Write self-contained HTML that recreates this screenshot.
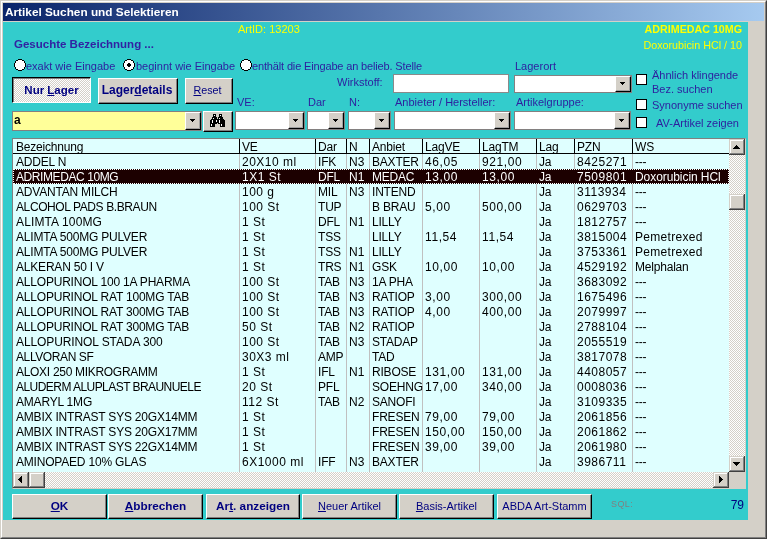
<!DOCTYPE html><html><head><meta charset="utf-8"><style>
*{margin:0;padding:0;box-sizing:border-box}
html,body{width:767px;height:539px;overflow:hidden;background:#d4d0c8;font-family:"Liberation Sans",sans-serif}
#w{position:absolute;left:0;top:0;width:767px;height:539px;will-change:transform}
.a{position:absolute}
.t{position:absolute;white-space:nowrap;line-height:1}
.lbl{color:#2e1e9e;font-size:11px}
.btn{position:absolute;background:#d4d0c8;border-top:1px solid #fff;border-left:1px solid #fff;border-right:1px solid #000;border-bottom:1px solid #000;box-shadow:inset -1px -1px #808080;color:#000080;font-size:11px;text-align:center;white-space:nowrap}
.combo{position:absolute;background:#fff;border:1px solid #8a8a8a}
.dd{position:absolute;right:0;top:0;width:16px;bottom:0;background:#d4d0c8;border-top:1px solid #d4d0c8;border-left:1px solid #d4d0c8;border-right:1px solid #000;border-bottom:1px solid #000;box-shadow:inset 1px 1px #fff,inset -1px -1px #808080}
.arr{position:absolute;left:4px;top:6px;width:0;height:0;border-left:3.5px solid transparent;border-right:3.5px solid transparent;border-top:4px solid #000}
.chk{position:absolute;width:11px;height:11px;background:#fff;border:1px solid #000}
.rad{position:absolute;width:12px;height:12px;background:#fff;border:1px solid #000;border-radius:50%}
.row{position:absolute;left:0;height:15px;width:716px;font-size:11.5px;color:#000}
.row .c{position:absolute;top:1px;white-space:nowrap;line-height:13px}
.sb{position:absolute;background:#d4d0c8;box-shadow:inset -1px -1px #404040,inset 1px 1px #d4d0c8,inset -2px -2px #808080,inset 2px 2px #fff}
u{text-decoration:underline;text-decoration-thickness:1px;text-underline-offset:0.5px;text-decoration-skip-ink:none}
</style></head><body><div id="w">

<div class="a" style="left:0;top:0;width:767px;height:539px;border-top:1px solid #d4d0c8;border-left:1px solid #d4d0c8;border-right:1px solid #404040;border-bottom:1px solid #404040"></div>
<div class="a" style="left:1px;top:1px;width:765px;height:537px;border-top:1px solid #fff;border-left:1px solid #fff;border-right:1px solid #808080;border-bottom:1px solid #808080"></div>
<div class="a" style="left:3px;top:3px;width:761px;height:18px;background:linear-gradient(90deg,#0a246a,#a6caf0)"></div>
<div class="t" style="left:5px;top:5px;color:#fff;font-weight:bold;font-size:11.8px;line-height:14px">Artikel Suchen und Selektieren</div>
<div class="a" style="left:3px;top:22px;width:745px;height:498px;background:#33cccc"></div>
<div class="t" style="left:238px;top:23px;color:#ffff00;font-size:11px;line-height:12px">ArtID: 13203</div>
<div class="t" style="left:0;width:742px;text-align:right;top:23px;color:#ffff00;font-size:10.7px;font-weight:bold;line-height:12px">ADRIMEDAC 10MG</div>
<div class="t" style="left:0;width:742px;text-align:right;top:39px;color:#ffff00;font-size:10.75px;line-height:12px">Doxorubicin HCl / 10</div>
<div class="t" style="left:14px;top:38px;color:#3222a2;font-size:11.5px;font-weight:bold;line-height:12px">Gesuchte Bezeichnung ...</div>
<svg class="a" style="left:14px;top:59px" width="12" height="12" shape-rendering="crispEdges"><rect x="4" y="0" width="1" height="1" fill="#000"/><rect x="5" y="0" width="1" height="1" fill="#000"/><rect x="6" y="0" width="1" height="1" fill="#000"/><rect x="7" y="0" width="1" height="1" fill="#000"/><rect x="2" y="1" width="1" height="1" fill="#000"/><rect x="3" y="1" width="1" height="1" fill="#000"/><rect x="4" y="1" width="1" height="1" fill="#fff"/><rect x="5" y="1" width="1" height="1" fill="#fff"/><rect x="6" y="1" width="1" height="1" fill="#fff"/><rect x="7" y="1" width="1" height="1" fill="#fff"/><rect x="8" y="1" width="1" height="1" fill="#000"/><rect x="9" y="1" width="1" height="1" fill="#000"/><rect x="1" y="2" width="1" height="1" fill="#000"/><rect x="2" y="2" width="1" height="1" fill="#fff"/><rect x="3" y="2" width="1" height="1" fill="#fff"/><rect x="4" y="2" width="1" height="1" fill="#fff"/><rect x="5" y="2" width="1" height="1" fill="#fff"/><rect x="6" y="2" width="1" height="1" fill="#fff"/><rect x="7" y="2" width="1" height="1" fill="#fff"/><rect x="8" y="2" width="1" height="1" fill="#fff"/><rect x="9" y="2" width="1" height="1" fill="#fff"/><rect x="10" y="2" width="1" height="1" fill="#000"/><rect x="1" y="3" width="1" height="1" fill="#000"/><rect x="2" y="3" width="1" height="1" fill="#fff"/><rect x="3" y="3" width="1" height="1" fill="#fff"/><rect x="4" y="3" width="1" height="1" fill="#fff"/><rect x="5" y="3" width="1" height="1" fill="#fff"/><rect x="6" y="3" width="1" height="1" fill="#fff"/><rect x="7" y="3" width="1" height="1" fill="#fff"/><rect x="8" y="3" width="1" height="1" fill="#fff"/><rect x="9" y="3" width="1" height="1" fill="#fff"/><rect x="10" y="3" width="1" height="1" fill="#000"/><rect x="0" y="4" width="1" height="1" fill="#000"/><rect x="1" y="4" width="1" height="1" fill="#fff"/><rect x="2" y="4" width="1" height="1" fill="#fff"/><rect x="3" y="4" width="1" height="1" fill="#fff"/><rect x="4" y="4" width="1" height="1" fill="#fff"/><rect x="5" y="4" width="1" height="1" fill="#fff"/><rect x="6" y="4" width="1" height="1" fill="#fff"/><rect x="7" y="4" width="1" height="1" fill="#fff"/><rect x="8" y="4" width="1" height="1" fill="#fff"/><rect x="9" y="4" width="1" height="1" fill="#fff"/><rect x="10" y="4" width="1" height="1" fill="#fff"/><rect x="11" y="4" width="1" height="1" fill="#000"/><rect x="0" y="5" width="1" height="1" fill="#000"/><rect x="1" y="5" width="1" height="1" fill="#fff"/><rect x="2" y="5" width="1" height="1" fill="#fff"/><rect x="3" y="5" width="1" height="1" fill="#fff"/><rect x="4" y="5" width="1" height="1" fill="#fff"/><rect x="5" y="5" width="1" height="1" fill="#fff"/><rect x="6" y="5" width="1" height="1" fill="#fff"/><rect x="7" y="5" width="1" height="1" fill="#fff"/><rect x="8" y="5" width="1" height="1" fill="#fff"/><rect x="9" y="5" width="1" height="1" fill="#fff"/><rect x="10" y="5" width="1" height="1" fill="#fff"/><rect x="11" y="5" width="1" height="1" fill="#000"/><rect x="0" y="6" width="1" height="1" fill="#000"/><rect x="1" y="6" width="1" height="1" fill="#fff"/><rect x="2" y="6" width="1" height="1" fill="#fff"/><rect x="3" y="6" width="1" height="1" fill="#fff"/><rect x="4" y="6" width="1" height="1" fill="#fff"/><rect x="5" y="6" width="1" height="1" fill="#fff"/><rect x="6" y="6" width="1" height="1" fill="#fff"/><rect x="7" y="6" width="1" height="1" fill="#fff"/><rect x="8" y="6" width="1" height="1" fill="#fff"/><rect x="9" y="6" width="1" height="1" fill="#fff"/><rect x="10" y="6" width="1" height="1" fill="#fff"/><rect x="11" y="6" width="1" height="1" fill="#000"/><rect x="0" y="7" width="1" height="1" fill="#000"/><rect x="1" y="7" width="1" height="1" fill="#fff"/><rect x="2" y="7" width="1" height="1" fill="#fff"/><rect x="3" y="7" width="1" height="1" fill="#fff"/><rect x="4" y="7" width="1" height="1" fill="#fff"/><rect x="5" y="7" width="1" height="1" fill="#fff"/><rect x="6" y="7" width="1" height="1" fill="#fff"/><rect x="7" y="7" width="1" height="1" fill="#fff"/><rect x="8" y="7" width="1" height="1" fill="#fff"/><rect x="9" y="7" width="1" height="1" fill="#fff"/><rect x="10" y="7" width="1" height="1" fill="#fff"/><rect x="11" y="7" width="1" height="1" fill="#000"/><rect x="1" y="8" width="1" height="1" fill="#000"/><rect x="2" y="8" width="1" height="1" fill="#fff"/><rect x="3" y="8" width="1" height="1" fill="#fff"/><rect x="4" y="8" width="1" height="1" fill="#fff"/><rect x="5" y="8" width="1" height="1" fill="#fff"/><rect x="6" y="8" width="1" height="1" fill="#fff"/><rect x="7" y="8" width="1" height="1" fill="#fff"/><rect x="8" y="8" width="1" height="1" fill="#fff"/><rect x="9" y="8" width="1" height="1" fill="#fff"/><rect x="10" y="8" width="1" height="1" fill="#000"/><rect x="1" y="9" width="1" height="1" fill="#000"/><rect x="2" y="9" width="1" height="1" fill="#fff"/><rect x="3" y="9" width="1" height="1" fill="#fff"/><rect x="4" y="9" width="1" height="1" fill="#fff"/><rect x="5" y="9" width="1" height="1" fill="#fff"/><rect x="6" y="9" width="1" height="1" fill="#fff"/><rect x="7" y="9" width="1" height="1" fill="#fff"/><rect x="8" y="9" width="1" height="1" fill="#fff"/><rect x="9" y="9" width="1" height="1" fill="#fff"/><rect x="10" y="9" width="1" height="1" fill="#000"/><rect x="2" y="10" width="1" height="1" fill="#000"/><rect x="3" y="10" width="1" height="1" fill="#000"/><rect x="4" y="10" width="1" height="1" fill="#fff"/><rect x="5" y="10" width="1" height="1" fill="#fff"/><rect x="6" y="10" width="1" height="1" fill="#fff"/><rect x="7" y="10" width="1" height="1" fill="#fff"/><rect x="8" y="10" width="1" height="1" fill="#000"/><rect x="9" y="10" width="1" height="1" fill="#000"/><rect x="4" y="11" width="1" height="1" fill="#000"/><rect x="5" y="11" width="1" height="1" fill="#000"/><rect x="6" y="11" width="1" height="1" fill="#000"/><rect x="7" y="11" width="1" height="1" fill="#000"/></svg>
<div class="t lbl" style="left:26px;top:60px;line-height:12px">exakt wie Eingabe</div>
<svg class="a" style="left:123px;top:59px" width="12" height="12" shape-rendering="crispEdges"><rect x="4" y="0" width="1" height="1" fill="#000"/><rect x="5" y="0" width="1" height="1" fill="#000"/><rect x="6" y="0" width="1" height="1" fill="#000"/><rect x="7" y="0" width="1" height="1" fill="#000"/><rect x="2" y="1" width="1" height="1" fill="#000"/><rect x="3" y="1" width="1" height="1" fill="#000"/><rect x="4" y="1" width="1" height="1" fill="#fff"/><rect x="5" y="1" width="1" height="1" fill="#fff"/><rect x="6" y="1" width="1" height="1" fill="#fff"/><rect x="7" y="1" width="1" height="1" fill="#fff"/><rect x="8" y="1" width="1" height="1" fill="#000"/><rect x="9" y="1" width="1" height="1" fill="#000"/><rect x="1" y="2" width="1" height="1" fill="#000"/><rect x="2" y="2" width="1" height="1" fill="#fff"/><rect x="3" y="2" width="1" height="1" fill="#fff"/><rect x="4" y="2" width="1" height="1" fill="#fff"/><rect x="5" y="2" width="1" height="1" fill="#fff"/><rect x="6" y="2" width="1" height="1" fill="#fff"/><rect x="7" y="2" width="1" height="1" fill="#fff"/><rect x="8" y="2" width="1" height="1" fill="#fff"/><rect x="9" y="2" width="1" height="1" fill="#fff"/><rect x="10" y="2" width="1" height="1" fill="#000"/><rect x="1" y="3" width="1" height="1" fill="#000"/><rect x="2" y="3" width="1" height="1" fill="#fff"/><rect x="3" y="3" width="1" height="1" fill="#fff"/><rect x="4" y="3" width="1" height="1" fill="#fff"/><rect x="5" y="3" width="1" height="1" fill="#fff"/><rect x="6" y="3" width="1" height="1" fill="#fff"/><rect x="7" y="3" width="1" height="1" fill="#fff"/><rect x="8" y="3" width="1" height="1" fill="#fff"/><rect x="9" y="3" width="1" height="1" fill="#fff"/><rect x="10" y="3" width="1" height="1" fill="#000"/><rect x="0" y="4" width="1" height="1" fill="#000"/><rect x="1" y="4" width="1" height="1" fill="#fff"/><rect x="2" y="4" width="1" height="1" fill="#fff"/><rect x="3" y="4" width="1" height="1" fill="#fff"/><rect x="4" y="4" width="1" height="1" fill="#fff"/><rect x="5" y="4" width="1" height="1" fill="#000"/><rect x="6" y="4" width="1" height="1" fill="#000"/><rect x="7" y="4" width="1" height="1" fill="#fff"/><rect x="8" y="4" width="1" height="1" fill="#fff"/><rect x="9" y="4" width="1" height="1" fill="#fff"/><rect x="10" y="4" width="1" height="1" fill="#fff"/><rect x="11" y="4" width="1" height="1" fill="#000"/><rect x="0" y="5" width="1" height="1" fill="#000"/><rect x="1" y="5" width="1" height="1" fill="#fff"/><rect x="2" y="5" width="1" height="1" fill="#fff"/><rect x="3" y="5" width="1" height="1" fill="#fff"/><rect x="4" y="5" width="1" height="1" fill="#000"/><rect x="5" y="5" width="1" height="1" fill="#000"/><rect x="6" y="5" width="1" height="1" fill="#000"/><rect x="7" y="5" width="1" height="1" fill="#000"/><rect x="8" y="5" width="1" height="1" fill="#fff"/><rect x="9" y="5" width="1" height="1" fill="#fff"/><rect x="10" y="5" width="1" height="1" fill="#fff"/><rect x="11" y="5" width="1" height="1" fill="#000"/><rect x="0" y="6" width="1" height="1" fill="#000"/><rect x="1" y="6" width="1" height="1" fill="#fff"/><rect x="2" y="6" width="1" height="1" fill="#fff"/><rect x="3" y="6" width="1" height="1" fill="#fff"/><rect x="4" y="6" width="1" height="1" fill="#000"/><rect x="5" y="6" width="1" height="1" fill="#000"/><rect x="6" y="6" width="1" height="1" fill="#000"/><rect x="7" y="6" width="1" height="1" fill="#000"/><rect x="8" y="6" width="1" height="1" fill="#fff"/><rect x="9" y="6" width="1" height="1" fill="#fff"/><rect x="10" y="6" width="1" height="1" fill="#fff"/><rect x="11" y="6" width="1" height="1" fill="#000"/><rect x="0" y="7" width="1" height="1" fill="#000"/><rect x="1" y="7" width="1" height="1" fill="#fff"/><rect x="2" y="7" width="1" height="1" fill="#fff"/><rect x="3" y="7" width="1" height="1" fill="#fff"/><rect x="4" y="7" width="1" height="1" fill="#fff"/><rect x="5" y="7" width="1" height="1" fill="#000"/><rect x="6" y="7" width="1" height="1" fill="#000"/><rect x="7" y="7" width="1" height="1" fill="#fff"/><rect x="8" y="7" width="1" height="1" fill="#fff"/><rect x="9" y="7" width="1" height="1" fill="#fff"/><rect x="10" y="7" width="1" height="1" fill="#fff"/><rect x="11" y="7" width="1" height="1" fill="#000"/><rect x="1" y="8" width="1" height="1" fill="#000"/><rect x="2" y="8" width="1" height="1" fill="#fff"/><rect x="3" y="8" width="1" height="1" fill="#fff"/><rect x="4" y="8" width="1" height="1" fill="#fff"/><rect x="5" y="8" width="1" height="1" fill="#fff"/><rect x="6" y="8" width="1" height="1" fill="#fff"/><rect x="7" y="8" width="1" height="1" fill="#fff"/><rect x="8" y="8" width="1" height="1" fill="#fff"/><rect x="9" y="8" width="1" height="1" fill="#fff"/><rect x="10" y="8" width="1" height="1" fill="#000"/><rect x="1" y="9" width="1" height="1" fill="#000"/><rect x="2" y="9" width="1" height="1" fill="#fff"/><rect x="3" y="9" width="1" height="1" fill="#fff"/><rect x="4" y="9" width="1" height="1" fill="#fff"/><rect x="5" y="9" width="1" height="1" fill="#fff"/><rect x="6" y="9" width="1" height="1" fill="#fff"/><rect x="7" y="9" width="1" height="1" fill="#fff"/><rect x="8" y="9" width="1" height="1" fill="#fff"/><rect x="9" y="9" width="1" height="1" fill="#fff"/><rect x="10" y="9" width="1" height="1" fill="#000"/><rect x="2" y="10" width="1" height="1" fill="#000"/><rect x="3" y="10" width="1" height="1" fill="#000"/><rect x="4" y="10" width="1" height="1" fill="#fff"/><rect x="5" y="10" width="1" height="1" fill="#fff"/><rect x="6" y="10" width="1" height="1" fill="#fff"/><rect x="7" y="10" width="1" height="1" fill="#fff"/><rect x="8" y="10" width="1" height="1" fill="#000"/><rect x="9" y="10" width="1" height="1" fill="#000"/><rect x="4" y="11" width="1" height="1" fill="#000"/><rect x="5" y="11" width="1" height="1" fill="#000"/><rect x="6" y="11" width="1" height="1" fill="#000"/><rect x="7" y="11" width="1" height="1" fill="#000"/></svg>
<div class="t lbl" style="left:136px;top:60px;line-height:12px">beginnt wie Eingabe</div>
<svg class="a" style="left:240px;top:59px" width="12" height="12" shape-rendering="crispEdges"><rect x="4" y="0" width="1" height="1" fill="#000"/><rect x="5" y="0" width="1" height="1" fill="#000"/><rect x="6" y="0" width="1" height="1" fill="#000"/><rect x="7" y="0" width="1" height="1" fill="#000"/><rect x="2" y="1" width="1" height="1" fill="#000"/><rect x="3" y="1" width="1" height="1" fill="#000"/><rect x="4" y="1" width="1" height="1" fill="#fff"/><rect x="5" y="1" width="1" height="1" fill="#fff"/><rect x="6" y="1" width="1" height="1" fill="#fff"/><rect x="7" y="1" width="1" height="1" fill="#fff"/><rect x="8" y="1" width="1" height="1" fill="#000"/><rect x="9" y="1" width="1" height="1" fill="#000"/><rect x="1" y="2" width="1" height="1" fill="#000"/><rect x="2" y="2" width="1" height="1" fill="#fff"/><rect x="3" y="2" width="1" height="1" fill="#fff"/><rect x="4" y="2" width="1" height="1" fill="#fff"/><rect x="5" y="2" width="1" height="1" fill="#fff"/><rect x="6" y="2" width="1" height="1" fill="#fff"/><rect x="7" y="2" width="1" height="1" fill="#fff"/><rect x="8" y="2" width="1" height="1" fill="#fff"/><rect x="9" y="2" width="1" height="1" fill="#fff"/><rect x="10" y="2" width="1" height="1" fill="#000"/><rect x="1" y="3" width="1" height="1" fill="#000"/><rect x="2" y="3" width="1" height="1" fill="#fff"/><rect x="3" y="3" width="1" height="1" fill="#fff"/><rect x="4" y="3" width="1" height="1" fill="#fff"/><rect x="5" y="3" width="1" height="1" fill="#fff"/><rect x="6" y="3" width="1" height="1" fill="#fff"/><rect x="7" y="3" width="1" height="1" fill="#fff"/><rect x="8" y="3" width="1" height="1" fill="#fff"/><rect x="9" y="3" width="1" height="1" fill="#fff"/><rect x="10" y="3" width="1" height="1" fill="#000"/><rect x="0" y="4" width="1" height="1" fill="#000"/><rect x="1" y="4" width="1" height="1" fill="#fff"/><rect x="2" y="4" width="1" height="1" fill="#fff"/><rect x="3" y="4" width="1" height="1" fill="#fff"/><rect x="4" y="4" width="1" height="1" fill="#fff"/><rect x="5" y="4" width="1" height="1" fill="#fff"/><rect x="6" y="4" width="1" height="1" fill="#fff"/><rect x="7" y="4" width="1" height="1" fill="#fff"/><rect x="8" y="4" width="1" height="1" fill="#fff"/><rect x="9" y="4" width="1" height="1" fill="#fff"/><rect x="10" y="4" width="1" height="1" fill="#fff"/><rect x="11" y="4" width="1" height="1" fill="#000"/><rect x="0" y="5" width="1" height="1" fill="#000"/><rect x="1" y="5" width="1" height="1" fill="#fff"/><rect x="2" y="5" width="1" height="1" fill="#fff"/><rect x="3" y="5" width="1" height="1" fill="#fff"/><rect x="4" y="5" width="1" height="1" fill="#fff"/><rect x="5" y="5" width="1" height="1" fill="#fff"/><rect x="6" y="5" width="1" height="1" fill="#fff"/><rect x="7" y="5" width="1" height="1" fill="#fff"/><rect x="8" y="5" width="1" height="1" fill="#fff"/><rect x="9" y="5" width="1" height="1" fill="#fff"/><rect x="10" y="5" width="1" height="1" fill="#fff"/><rect x="11" y="5" width="1" height="1" fill="#000"/><rect x="0" y="6" width="1" height="1" fill="#000"/><rect x="1" y="6" width="1" height="1" fill="#fff"/><rect x="2" y="6" width="1" height="1" fill="#fff"/><rect x="3" y="6" width="1" height="1" fill="#fff"/><rect x="4" y="6" width="1" height="1" fill="#fff"/><rect x="5" y="6" width="1" height="1" fill="#fff"/><rect x="6" y="6" width="1" height="1" fill="#fff"/><rect x="7" y="6" width="1" height="1" fill="#fff"/><rect x="8" y="6" width="1" height="1" fill="#fff"/><rect x="9" y="6" width="1" height="1" fill="#fff"/><rect x="10" y="6" width="1" height="1" fill="#fff"/><rect x="11" y="6" width="1" height="1" fill="#000"/><rect x="0" y="7" width="1" height="1" fill="#000"/><rect x="1" y="7" width="1" height="1" fill="#fff"/><rect x="2" y="7" width="1" height="1" fill="#fff"/><rect x="3" y="7" width="1" height="1" fill="#fff"/><rect x="4" y="7" width="1" height="1" fill="#fff"/><rect x="5" y="7" width="1" height="1" fill="#fff"/><rect x="6" y="7" width="1" height="1" fill="#fff"/><rect x="7" y="7" width="1" height="1" fill="#fff"/><rect x="8" y="7" width="1" height="1" fill="#fff"/><rect x="9" y="7" width="1" height="1" fill="#fff"/><rect x="10" y="7" width="1" height="1" fill="#fff"/><rect x="11" y="7" width="1" height="1" fill="#000"/><rect x="1" y="8" width="1" height="1" fill="#000"/><rect x="2" y="8" width="1" height="1" fill="#fff"/><rect x="3" y="8" width="1" height="1" fill="#fff"/><rect x="4" y="8" width="1" height="1" fill="#fff"/><rect x="5" y="8" width="1" height="1" fill="#fff"/><rect x="6" y="8" width="1" height="1" fill="#fff"/><rect x="7" y="8" width="1" height="1" fill="#fff"/><rect x="8" y="8" width="1" height="1" fill="#fff"/><rect x="9" y="8" width="1" height="1" fill="#fff"/><rect x="10" y="8" width="1" height="1" fill="#000"/><rect x="1" y="9" width="1" height="1" fill="#000"/><rect x="2" y="9" width="1" height="1" fill="#fff"/><rect x="3" y="9" width="1" height="1" fill="#fff"/><rect x="4" y="9" width="1" height="1" fill="#fff"/><rect x="5" y="9" width="1" height="1" fill="#fff"/><rect x="6" y="9" width="1" height="1" fill="#fff"/><rect x="7" y="9" width="1" height="1" fill="#fff"/><rect x="8" y="9" width="1" height="1" fill="#fff"/><rect x="9" y="9" width="1" height="1" fill="#fff"/><rect x="10" y="9" width="1" height="1" fill="#000"/><rect x="2" y="10" width="1" height="1" fill="#000"/><rect x="3" y="10" width="1" height="1" fill="#000"/><rect x="4" y="10" width="1" height="1" fill="#fff"/><rect x="5" y="10" width="1" height="1" fill="#fff"/><rect x="6" y="10" width="1" height="1" fill="#fff"/><rect x="7" y="10" width="1" height="1" fill="#fff"/><rect x="8" y="10" width="1" height="1" fill="#000"/><rect x="9" y="10" width="1" height="1" fill="#000"/><rect x="4" y="11" width="1" height="1" fill="#000"/><rect x="5" y="11" width="1" height="1" fill="#000"/><rect x="6" y="11" width="1" height="1" fill="#000"/><rect x="7" y="11" width="1" height="1" fill="#000"/></svg>
<div class="t lbl" style="left:252px;top:60px;line-height:12px;letter-spacing:-0.15px">enthält die Eingabe an belieb. Stelle</div>
<div class="a" style="left:12px;top:77px;width:79px;height:26px;border-top:1px solid #000;border-left:1px solid #000;border-right:1px solid #fff;border-bottom:1px solid #fff;box-shadow:inset 1px 1px #808080;background:repeating-conic-gradient(#fff 0 25%,#d4d0c8 0 50%) 0 0/2px 2px"></div>
<div class="t" style="left:12px;width:79px;text-align:center;top:84px;color:#000080;font-weight:bold;font-size:11.5px;line-height:12px;padding-left:0px">Nur <u>L</u>ager</div>
<div class="btn" style="left:98px;top:78px;width:80px;height:26px;font-weight:bold;font-size:12px;line-height:22px;padding-right:2px">Lager<u>d</u>etails</div>
<div class="btn" style="left:185px;top:78px;width:48px;height:26px;line-height:22px;padding-right:3px;font-size:10.75px"><u>R</u>eset</div>
<div class="t lbl" style="left:337px;top:76px;line-height:12px">Wirkstoff:</div>
<div class="a" style="left:393px;top:74px;width:116px;height:19px;background:#fff;border:1px solid #8a8a8a"></div>
<div class="t lbl" style="left:515px;top:60px;line-height:12px">Lagerort</div>
<div class="a" style="left:514px;top:75px;width:118px;height:18px;background:#fff;border:1px solid #848080"><div class="a" style="left:100px;top:0;width:16px;height:16px;background:#d4d0c8;border-top:1px solid #fff;border-left:1px solid #fff;border-right:1px solid #000;border-bottom:1px solid #000;box-shadow:inset -1px -1px #a0a0a0"></div><svg class="a" style="left:105px;top:6px" width="5" height="3" shape-rendering="crispEdges"><rect x="0" y="0" width="5" height="1"/><rect x="1" y="1" width="3" height="1"/><rect x="2" y="2" width="1" height="1"/></svg></div>
<div class="t lbl" style="left:237px;top:96px;line-height:12px">VE:</div>
<div class="t lbl" style="left:308px;top:96px;line-height:12px">Dar</div>
<div class="t lbl" style="left:349px;top:96px;line-height:12px">N:</div>
<div class="t lbl" style="left:395px;top:96px;line-height:12px">Anbieter / Hersteller:</div>
<div class="t lbl" style="left:516px;top:96px;line-height:12px">Artikelgruppe:</div>
<div class="a" style="left:12px;top:111px;width:190px;height:20px;background:#ffff99;border:1px solid #848080"><div class="a" style="left:172px;top:0;width:16px;height:18px;background:#d4d0c8;border-top:1px solid #fff;border-left:1px solid #fff;border-right:1px solid #000;border-bottom:1px solid #000;box-shadow:inset -1px -1px #a0a0a0"></div><svg class="a" style="left:177px;top:7px" width="5" height="3" shape-rendering="crispEdges"><rect x="0" y="0" width="5" height="1"/><rect x="1" y="1" width="3" height="1"/><rect x="2" y="2" width="1" height="1"/></svg></div>
<div class="t" style="left:14px;top:114px;font-size:12px;font-weight:bold;line-height:12px;color:#000">a</div>
<div class="btn" style="left:203px;top:111px;width:30px;height:21px"></div>
<svg class="a" style="left:210px;top:114px" width="15" height="13" shape-rendering="crispEdges"><rect x="3" y="0" width="1" height="1" fill="#000"/><rect x="4" y="0" width="1" height="1" fill="#000"/><rect x="5" y="0" width="1" height="1" fill="#000"/><rect x="9" y="0" width="1" height="1" fill="#000"/><rect x="10" y="0" width="1" height="1" fill="#000"/><rect x="11" y="0" width="1" height="1" fill="#000"/><rect x="3" y="1" width="1" height="1" fill="#000"/><rect x="4" y="1" width="1" height="1" fill="#fff"/><rect x="5" y="1" width="1" height="1" fill="#000"/><rect x="9" y="1" width="1" height="1" fill="#000"/><rect x="10" y="1" width="1" height="1" fill="#fff"/><rect x="11" y="1" width="1" height="1" fill="#000"/><rect x="3" y="2" width="1" height="1" fill="#000"/><rect x="4" y="2" width="1" height="1" fill="#000"/><rect x="5" y="2" width="1" height="1" fill="#000"/><rect x="9" y="2" width="1" height="1" fill="#000"/><rect x="10" y="2" width="1" height="1" fill="#000"/><rect x="11" y="2" width="1" height="1" fill="#000"/><rect x="2" y="3" width="1" height="1" fill="#000"/><rect x="3" y="3" width="1" height="1" fill="#000"/><rect x="4" y="3" width="1" height="1" fill="#000"/><rect x="5" y="3" width="1" height="1" fill="#000"/><rect x="6" y="3" width="1" height="1" fill="#000"/><rect x="8" y="3" width="1" height="1" fill="#000"/><rect x="9" y="3" width="1" height="1" fill="#000"/><rect x="10" y="3" width="1" height="1" fill="#000"/><rect x="11" y="3" width="1" height="1" fill="#000"/><rect x="12" y="3" width="1" height="1" fill="#000"/><rect x="2" y="4" width="1" height="1" fill="#000"/><rect x="3" y="4" width="1" height="1" fill="#fff"/><rect x="4" y="4" width="1" height="1" fill="#000"/><rect x="5" y="4" width="1" height="1" fill="#000"/><rect x="6" y="4" width="1" height="1" fill="#000"/><rect x="8" y="4" width="1" height="1" fill="#000"/><rect x="9" y="4" width="1" height="1" fill="#fff"/><rect x="10" y="4" width="1" height="1" fill="#000"/><rect x="11" y="4" width="1" height="1" fill="#000"/><rect x="12" y="4" width="1" height="1" fill="#000"/><rect x="1" y="5" width="1" height="1" fill="#000"/><rect x="2" y="5" width="1" height="1" fill="#000"/><rect x="3" y="5" width="1" height="1" fill="#000"/><rect x="4" y="5" width="1" height="1" fill="#000"/><rect x="5" y="5" width="1" height="1" fill="#000"/><rect x="6" y="5" width="1" height="1" fill="#000"/><rect x="7" y="5" width="1" height="1" fill="#000"/><rect x="8" y="5" width="1" height="1" fill="#000"/><rect x="9" y="5" width="1" height="1" fill="#000"/><rect x="10" y="5" width="1" height="1" fill="#000"/><rect x="11" y="5" width="1" height="1" fill="#000"/><rect x="12" y="5" width="1" height="1" fill="#000"/><rect x="13" y="5" width="1" height="1" fill="#000"/><rect x="0" y="6" width="1" height="1" fill="#000"/><rect x="1" y="6" width="1" height="1" fill="#000"/><rect x="2" y="6" width="1" height="1" fill="#fff"/><rect x="3" y="6" width="1" height="1" fill="#000"/><rect x="4" y="6" width="1" height="1" fill="#000"/><rect x="5" y="6" width="1" height="1" fill="#000"/><rect x="6" y="6" width="1" height="1" fill="#fff"/><rect x="7" y="6" width="1" height="1" fill="#000"/><rect x="8" y="6" width="1" height="1" fill="#000"/><rect x="9" y="6" width="1" height="1" fill="#fff"/><rect x="10" y="6" width="1" height="1" fill="#000"/><rect x="11" y="6" width="1" height="1" fill="#000"/><rect x="12" y="6" width="1" height="1" fill="#000"/><rect x="13" y="6" width="1" height="1" fill="#000"/><rect x="14" y="6" width="1" height="1" fill="#000"/><rect x="0" y="7" width="1" height="1" fill="#000"/><rect x="1" y="7" width="1" height="1" fill="#000"/><rect x="2" y="7" width="1" height="1" fill="#fff"/><rect x="3" y="7" width="1" height="1" fill="#000"/><rect x="4" y="7" width="1" height="1" fill="#000"/><rect x="5" y="7" width="1" height="1" fill="#000"/><rect x="6" y="7" width="1" height="1" fill="#fff"/><rect x="7" y="7" width="1" height="1" fill="#000"/><rect x="8" y="7" width="1" height="1" fill="#000"/><rect x="9" y="7" width="1" height="1" fill="#fff"/><rect x="10" y="7" width="1" height="1" fill="#000"/><rect x="11" y="7" width="1" height="1" fill="#000"/><rect x="12" y="7" width="1" height="1" fill="#000"/><rect x="13" y="7" width="1" height="1" fill="#000"/><rect x="14" y="7" width="1" height="1" fill="#000"/><rect x="0" y="8" width="1" height="1" fill="#000"/><rect x="1" y="8" width="1" height="1" fill="#000"/><rect x="2" y="8" width="1" height="1" fill="#fff"/><rect x="3" y="8" width="1" height="1" fill="#000"/><rect x="4" y="8" width="1" height="1" fill="#000"/><rect x="5" y="8" width="1" height="1" fill="#000"/><rect x="6" y="8" width="1" height="1" fill="#000"/><rect x="7" y="8" width="1" height="1" fill="#000"/><rect x="8" y="8" width="1" height="1" fill="#000"/><rect x="9" y="8" width="1" height="1" fill="#fff"/><rect x="10" y="8" width="1" height="1" fill="#000"/><rect x="11" y="8" width="1" height="1" fill="#000"/><rect x="12" y="8" width="1" height="1" fill="#000"/><rect x="13" y="8" width="1" height="1" fill="#000"/><rect x="14" y="8" width="1" height="1" fill="#000"/><rect x="0" y="9" width="1" height="1" fill="#000"/><rect x="1" y="9" width="1" height="1" fill="#000"/><rect x="2" y="9" width="1" height="1" fill="#000"/><rect x="3" y="9" width="1" height="1" fill="#000"/><rect x="4" y="9" width="1" height="1" fill="#000"/><rect x="5" y="9" width="1" height="1" fill="#000"/><rect x="6" y="9" width="1" height="1" fill="#000"/><rect x="8" y="9" width="1" height="1" fill="#000"/><rect x="9" y="9" width="1" height="1" fill="#000"/><rect x="10" y="9" width="1" height="1" fill="#000"/><rect x="11" y="9" width="1" height="1" fill="#000"/><rect x="12" y="9" width="1" height="1" fill="#000"/><rect x="13" y="9" width="1" height="1" fill="#000"/><rect x="14" y="9" width="1" height="1" fill="#000"/><rect x="0" y="10" width="1" height="1" fill="#000"/><rect x="1" y="10" width="1" height="1" fill="#fff"/><rect x="2" y="10" width="1" height="1" fill="#000"/><rect x="3" y="10" width="1" height="1" fill="#000"/><rect x="4" y="10" width="1" height="1" fill="#000"/><rect x="10" y="10" width="1" height="1" fill="#000"/><rect x="11" y="10" width="1" height="1" fill="#fff"/><rect x="12" y="10" width="1" height="1" fill="#000"/><rect x="13" y="10" width="1" height="1" fill="#000"/><rect x="14" y="10" width="1" height="1" fill="#000"/><rect x="0" y="11" width="1" height="1" fill="#000"/><rect x="1" y="11" width="1" height="1" fill="#fff"/><rect x="2" y="11" width="1" height="1" fill="#000"/><rect x="3" y="11" width="1" height="1" fill="#000"/><rect x="4" y="11" width="1" height="1" fill="#000"/><rect x="10" y="11" width="1" height="1" fill="#000"/><rect x="11" y="11" width="1" height="1" fill="#fff"/><rect x="12" y="11" width="1" height="1" fill="#000"/><rect x="13" y="11" width="1" height="1" fill="#000"/><rect x="14" y="11" width="1" height="1" fill="#000"/><rect x="0" y="12" width="1" height="1" fill="#000"/><rect x="1" y="12" width="1" height="1" fill="#000"/><rect x="2" y="12" width="1" height="1" fill="#000"/><rect x="3" y="12" width="1" height="1" fill="#000"/><rect x="4" y="12" width="1" height="1" fill="#000"/><rect x="10" y="12" width="1" height="1" fill="#000"/><rect x="11" y="12" width="1" height="1" fill="#000"/><rect x="12" y="12" width="1" height="1" fill="#000"/><rect x="13" y="12" width="1" height="1" fill="#000"/><rect x="14" y="12" width="1" height="1" fill="#000"/></svg>
<div class="a" style="left:235px;top:111px;width:70px;height:19px;background:#fff;border:1px solid #848080"><div class="a" style="left:52px;top:0;width:16px;height:17px;background:#d4d0c8;border-top:1px solid #fff;border-left:1px solid #fff;border-right:1px solid #000;border-bottom:1px solid #000;box-shadow:inset -1px -1px #a0a0a0"></div><svg class="a" style="left:57px;top:7px" width="5" height="3" shape-rendering="crispEdges"><rect x="0" y="0" width="5" height="1"/><rect x="1" y="1" width="3" height="1"/><rect x="2" y="2" width="1" height="1"/></svg></div>
<div class="a" style="left:307px;top:111px;width:38px;height:19px;background:#fff;border:1px solid #848080"><div class="a" style="left:20px;top:0;width:16px;height:17px;background:#d4d0c8;border-top:1px solid #fff;border-left:1px solid #fff;border-right:1px solid #000;border-bottom:1px solid #000;box-shadow:inset -1px -1px #a0a0a0"></div><svg class="a" style="left:25px;top:7px" width="5" height="3" shape-rendering="crispEdges"><rect x="0" y="0" width="5" height="1"/><rect x="1" y="1" width="3" height="1"/><rect x="2" y="2" width="1" height="1"/></svg></div>
<div class="a" style="left:348px;top:111px;width:43px;height:19px;background:#fff;border:1px solid #848080"><div class="a" style="left:25px;top:0;width:16px;height:17px;background:#d4d0c8;border-top:1px solid #fff;border-left:1px solid #fff;border-right:1px solid #000;border-bottom:1px solid #000;box-shadow:inset -1px -1px #a0a0a0"></div><svg class="a" style="left:30px;top:7px" width="5" height="3" shape-rendering="crispEdges"><rect x="0" y="0" width="5" height="1"/><rect x="1" y="1" width="3" height="1"/><rect x="2" y="2" width="1" height="1"/></svg></div>
<div class="a" style="left:394px;top:111px;width:117px;height:19px;background:#fff;border:1px solid #848080"><div class="a" style="left:99px;top:0;width:16px;height:17px;background:#d4d0c8;border-top:1px solid #fff;border-left:1px solid #fff;border-right:1px solid #000;border-bottom:1px solid #000;box-shadow:inset -1px -1px #a0a0a0"></div><svg class="a" style="left:104px;top:7px" width="5" height="3" shape-rendering="crispEdges"><rect x="0" y="0" width="5" height="1"/><rect x="1" y="1" width="3" height="1"/><rect x="2" y="2" width="1" height="1"/></svg></div>
<div class="a" style="left:514px;top:111px;width:117px;height:19px;background:#fff;border:1px solid #848080"><div class="a" style="left:99px;top:0;width:16px;height:17px;background:#d4d0c8;border-top:1px solid #fff;border-left:1px solid #fff;border-right:1px solid #000;border-bottom:1px solid #000;box-shadow:inset -1px -1px #a0a0a0"></div><svg class="a" style="left:104px;top:7px" width="5" height="3" shape-rendering="crispEdges"><rect x="0" y="0" width="5" height="1"/><rect x="1" y="1" width="3" height="1"/><rect x="2" y="2" width="1" height="1"/></svg></div>
<div class="chk" style="left:636px;top:74px"></div>
<div class="chk" style="left:636px;top:99px"></div>
<div class="chk" style="left:636px;top:117px"></div>
<div class="t lbl" style="left:652px;top:69px;line-height:12px">Ähnlich klingende</div>
<div class="t lbl" style="left:652px;top:83px;line-height:12px">Bez. suchen</div>
<div class="t lbl" style="left:652px;top:99px;line-height:12px">Synonyme suchen</div>
<div class="t lbl" style="left:656px;top:117px;line-height:12px">AV-Artikel zeigen</div>
<div class="a" style="left:12px;top:138px;width:734px;height:351px;background:#dfffff;border-top:1px solid #808080;border-left:1px solid #808080;border-right:1px solid #d4d0c8;border-bottom:1px solid #d4d0c8;overflow:hidden">
<div class="a" style="left:226px;top:15px;width:1px;height:320px;background:#c0c0c0"></div>
<div class="a" style="left:226px;top:0;width:1px;height:15px;background:#000"></div>
<div class="a" style="left:302px;top:15px;width:1px;height:320px;background:#c0c0c0"></div>
<div class="a" style="left:302px;top:0;width:1px;height:15px;background:#000"></div>
<div class="a" style="left:333px;top:15px;width:1px;height:320px;background:#c0c0c0"></div>
<div class="a" style="left:333px;top:0;width:1px;height:15px;background:#000"></div>
<div class="a" style="left:356px;top:15px;width:1px;height:320px;background:#c0c0c0"></div>
<div class="a" style="left:356px;top:0;width:1px;height:15px;background:#000"></div>
<div class="a" style="left:409px;top:15px;width:1px;height:320px;background:#c0c0c0"></div>
<div class="a" style="left:409px;top:0;width:1px;height:15px;background:#000"></div>
<div class="a" style="left:466px;top:15px;width:1px;height:320px;background:#c0c0c0"></div>
<div class="a" style="left:466px;top:0;width:1px;height:15px;background:#000"></div>
<div class="a" style="left:523px;top:15px;width:1px;height:320px;background:#c0c0c0"></div>
<div class="a" style="left:523px;top:0;width:1px;height:15px;background:#000"></div>
<div class="a" style="left:561px;top:15px;width:1px;height:320px;background:#c0c0c0"></div>
<div class="a" style="left:561px;top:0;width:1px;height:15px;background:#000"></div>
<div class="a" style="left:619px;top:15px;width:1px;height:320px;background:#c0c0c0"></div>
<div class="a" style="left:619px;top:0;width:1px;height:15px;background:#000"></div>
<div class="a" style="left:0;top:14px;width:716px;height:1px;background:#000"></div>
<div class="t" style="left:3px;top:2px;font-size:12px;letter-spacing:-0.2px;line-height:12px;color:#000">Bezeichnung</div>
<div class="t" style="left:229px;top:2px;font-size:12px;letter-spacing:-0.2px;line-height:12px;color:#000">VE</div>
<div class="t" style="left:305px;top:2px;font-size:12px;letter-spacing:-0.2px;line-height:12px;color:#000">Dar</div>
<div class="t" style="left:336px;top:2px;font-size:12px;letter-spacing:-0.2px;line-height:12px;color:#000">N</div>
<div class="t" style="left:359px;top:2px;font-size:12px;letter-spacing:-0.2px;line-height:12px;color:#000">Anbiet</div>
<div class="t" style="left:412px;top:2px;font-size:12px;letter-spacing:-0.2px;line-height:12px;color:#000">LagVE</div>
<div class="t" style="left:469px;top:2px;font-size:12px;letter-spacing:-0.2px;line-height:12px;color:#000">LagTM</div>
<div class="t" style="left:526px;top:2px;font-size:12px;letter-spacing:-0.2px;line-height:12px;color:#000">Lag</div>
<div class="t" style="left:564px;top:2px;font-size:12px;letter-spacing:-0.2px;line-height:12px;color:#000">PZN</div>
<div class="t" style="left:622px;top:2px;font-size:12px;letter-spacing:-0.2px;line-height:12px;color:#000">WS</div>
<div class="t" style="left:3px;top:17px;font-size:12px;letter-spacing:-0.2px;line-height:12px;color:#000">ADDEL N</div>
<div class="t" style="left:229px;top:17px;font-size:12px;letter-spacing:0.5px;line-height:12px;color:#000">20X10 ml</div>
<div class="t" style="left:305px;top:17px;font-size:12px;letter-spacing:-0.2px;line-height:12px;color:#000">IFK</div>
<div class="t" style="left:336px;top:17px;font-size:12px;letter-spacing:0.1px;line-height:12px;color:#000">N3</div>
<div class="t" style="left:359px;top:17px;font-size:12px;letter-spacing:-0.2px;line-height:12px;color:#000">BAXTER</div>
<div class="t" style="left:412px;top:17px;font-size:12px;letter-spacing:0.6px;line-height:12px;color:#000">46,05</div>
<div class="t" style="left:469px;top:17px;font-size:12px;letter-spacing:0.6px;line-height:12px;color:#000">921,00</div>
<div class="t" style="left:526px;top:17px;font-size:12px;letter-spacing:-0.2px;line-height:12px;color:#000">Ja</div>
<div class="t" style="left:564px;top:17px;font-size:12px;letter-spacing:0.5px;line-height:12px;color:#000">8425271</div>
<div class="t" style="left:622px;top:17px;font-size:12px;letter-spacing:-0.2px;line-height:12px;color:#000">---</div>
<div class="a" style="left:0;top:30px;width:716px;height:15px;background:#1c0000;border:1px dotted #fff"></div>
<div class="t" style="left:3px;top:32px;font-size:12px;letter-spacing:-0.41px;line-height:12px;color:#fff">ADRIMEDAC 10MG</div>
<div class="t" style="left:229px;top:32px;font-size:12px;letter-spacing:0.5px;line-height:12px;color:#fff">1X1 St</div>
<div class="t" style="left:305px;top:32px;font-size:12px;letter-spacing:-0.2px;line-height:12px;color:#fff">DFL</div>
<div class="t" style="left:336px;top:32px;font-size:12px;letter-spacing:0.1px;line-height:12px;color:#fff">N1</div>
<div class="t" style="left:359px;top:32px;font-size:12px;letter-spacing:-0.2px;line-height:12px;color:#fff">MEDAC</div>
<div class="t" style="left:412px;top:32px;font-size:12px;letter-spacing:0.6px;line-height:12px;color:#fff">13,00</div>
<div class="t" style="left:469px;top:32px;font-size:12px;letter-spacing:0.6px;line-height:12px;color:#fff">13,00</div>
<div class="t" style="left:526px;top:32px;font-size:12px;letter-spacing:-0.2px;line-height:12px;color:#fff">Ja</div>
<div class="t" style="left:564px;top:32px;font-size:12px;letter-spacing:0.5px;line-height:12px;color:#fff">7509801</div>
<div class="t" style="left:622px;top:32px;font-size:12px;letter-spacing:-0.07px;line-height:12px;color:#fff">Doxorubicin HCl</div>
<div class="t" style="left:3px;top:47px;font-size:12px;letter-spacing:-0.2px;line-height:12px;color:#000">ADVANTAN MILCH</div>
<div class="t" style="left:229px;top:47px;font-size:12px;letter-spacing:0.5px;line-height:12px;color:#000">100 g</div>
<div class="t" style="left:305px;top:47px;font-size:12px;letter-spacing:-0.2px;line-height:12px;color:#000">MIL</div>
<div class="t" style="left:336px;top:47px;font-size:12px;letter-spacing:0.1px;line-height:12px;color:#000">N3</div>
<div class="t" style="left:359px;top:47px;font-size:12px;letter-spacing:-0.2px;line-height:12px;color:#000">INTEND</div>
<div class="t" style="left:526px;top:47px;font-size:12px;letter-spacing:-0.2px;line-height:12px;color:#000">Ja</div>
<div class="t" style="left:564px;top:47px;font-size:12px;letter-spacing:0.5px;line-height:12px;color:#000">3113934</div>
<div class="t" style="left:622px;top:47px;font-size:12px;letter-spacing:-0.2px;line-height:12px;color:#000">---</div>
<div class="t" style="left:3px;top:62px;font-size:12px;letter-spacing:-0.4px;line-height:12px;color:#000">ALCOHOL PADS B.BRAUN</div>
<div class="t" style="left:229px;top:62px;font-size:12px;letter-spacing:0.5px;line-height:12px;color:#000">100 St</div>
<div class="t" style="left:305px;top:62px;font-size:12px;letter-spacing:-0.2px;line-height:12px;color:#000">TUP</div>
<div class="t" style="left:359px;top:62px;font-size:12px;letter-spacing:-0.2px;line-height:12px;color:#000">B BRAU</div>
<div class="t" style="left:412px;top:62px;font-size:12px;letter-spacing:0.6px;line-height:12px;color:#000">5,00</div>
<div class="t" style="left:469px;top:62px;font-size:12px;letter-spacing:0.6px;line-height:12px;color:#000">500,00</div>
<div class="t" style="left:526px;top:62px;font-size:12px;letter-spacing:-0.2px;line-height:12px;color:#000">Ja</div>
<div class="t" style="left:564px;top:62px;font-size:12px;letter-spacing:0.5px;line-height:12px;color:#000">0629703</div>
<div class="t" style="left:622px;top:62px;font-size:12px;letter-spacing:-0.2px;line-height:12px;color:#000">---</div>
<div class="t" style="left:3px;top:77px;font-size:12px;letter-spacing:0.13px;line-height:12px;color:#000">ALIMTA 100MG</div>
<div class="t" style="left:229px;top:77px;font-size:12px;letter-spacing:0.5px;line-height:12px;color:#000">1 St</div>
<div class="t" style="left:305px;top:77px;font-size:12px;letter-spacing:-0.2px;line-height:12px;color:#000">DFL</div>
<div class="t" style="left:336px;top:77px;font-size:12px;letter-spacing:0.1px;line-height:12px;color:#000">N1</div>
<div class="t" style="left:359px;top:77px;font-size:12px;letter-spacing:-0.2px;line-height:12px;color:#000">LILLY</div>
<div class="t" style="left:526px;top:77px;font-size:12px;letter-spacing:-0.2px;line-height:12px;color:#000">Ja</div>
<div class="t" style="left:564px;top:77px;font-size:12px;letter-spacing:0.5px;line-height:12px;color:#000">1812757</div>
<div class="t" style="left:622px;top:77px;font-size:12px;letter-spacing:-0.2px;line-height:12px;color:#000">---</div>
<div class="t" style="left:3px;top:92px;font-size:12px;letter-spacing:-0.2px;line-height:12px;color:#000">ALIMTA 500MG PULVER</div>
<div class="t" style="left:229px;top:92px;font-size:12px;letter-spacing:0.5px;line-height:12px;color:#000">1 St</div>
<div class="t" style="left:305px;top:92px;font-size:12px;letter-spacing:-0.2px;line-height:12px;color:#000">TSS</div>
<div class="t" style="left:359px;top:92px;font-size:12px;letter-spacing:-0.2px;line-height:12px;color:#000">LILLY</div>
<div class="t" style="left:412px;top:92px;font-size:12px;letter-spacing:0.6px;line-height:12px;color:#000">11,54</div>
<div class="t" style="left:469px;top:92px;font-size:12px;letter-spacing:0.6px;line-height:12px;color:#000">11,54</div>
<div class="t" style="left:526px;top:92px;font-size:12px;letter-spacing:-0.2px;line-height:12px;color:#000">Ja</div>
<div class="t" style="left:564px;top:92px;font-size:12px;letter-spacing:0.5px;line-height:12px;color:#000">3815004</div>
<div class="t" style="left:622px;top:92px;font-size:12px;letter-spacing:0.3px;line-height:12px;color:#000">Pemetrexed</div>
<div class="t" style="left:3px;top:107px;font-size:12px;letter-spacing:-0.2px;line-height:12px;color:#000">ALIMTA 500MG PULVER</div>
<div class="t" style="left:229px;top:107px;font-size:12px;letter-spacing:0.5px;line-height:12px;color:#000">1 St</div>
<div class="t" style="left:305px;top:107px;font-size:12px;letter-spacing:-0.2px;line-height:12px;color:#000">TSS</div>
<div class="t" style="left:336px;top:107px;font-size:12px;letter-spacing:0.1px;line-height:12px;color:#000">N1</div>
<div class="t" style="left:359px;top:107px;font-size:12px;letter-spacing:-0.2px;line-height:12px;color:#000">LILLY</div>
<div class="t" style="left:526px;top:107px;font-size:12px;letter-spacing:-0.2px;line-height:12px;color:#000">Ja</div>
<div class="t" style="left:564px;top:107px;font-size:12px;letter-spacing:0.5px;line-height:12px;color:#000">3753361</div>
<div class="t" style="left:622px;top:107px;font-size:12px;letter-spacing:0.3px;line-height:12px;color:#000">Pemetrexed</div>
<div class="t" style="left:3px;top:122px;font-size:12px;letter-spacing:-0.2px;line-height:12px;color:#000">ALKERAN 50 I V</div>
<div class="t" style="left:229px;top:122px;font-size:12px;letter-spacing:0.5px;line-height:12px;color:#000">1 St</div>
<div class="t" style="left:305px;top:122px;font-size:12px;letter-spacing:-0.2px;line-height:12px;color:#000">TRS</div>
<div class="t" style="left:336px;top:122px;font-size:12px;letter-spacing:0.1px;line-height:12px;color:#000">N1</div>
<div class="t" style="left:359px;top:122px;font-size:12px;letter-spacing:-0.2px;line-height:12px;color:#000">GSK</div>
<div class="t" style="left:412px;top:122px;font-size:12px;letter-spacing:0.6px;line-height:12px;color:#000">10,00</div>
<div class="t" style="left:469px;top:122px;font-size:12px;letter-spacing:0.6px;line-height:12px;color:#000">10,00</div>
<div class="t" style="left:526px;top:122px;font-size:12px;letter-spacing:-0.2px;line-height:12px;color:#000">Ja</div>
<div class="t" style="left:564px;top:122px;font-size:12px;letter-spacing:0.5px;line-height:12px;color:#000">4529192</div>
<div class="t" style="left:622px;top:122px;font-size:12px;letter-spacing:-0.2px;line-height:12px;color:#000">Melphalan</div>
<div class="t" style="left:3px;top:137px;font-size:12px;letter-spacing:-0.2px;line-height:12px;color:#000">ALLOPURINOL 100 1A PHARMA</div>
<div class="t" style="left:229px;top:137px;font-size:12px;letter-spacing:0.5px;line-height:12px;color:#000">100 St</div>
<div class="t" style="left:305px;top:137px;font-size:12px;letter-spacing:-0.2px;line-height:12px;color:#000">TAB</div>
<div class="t" style="left:336px;top:137px;font-size:12px;letter-spacing:0.1px;line-height:12px;color:#000">N3</div>
<div class="t" style="left:359px;top:137px;font-size:12px;letter-spacing:-0.2px;line-height:12px;color:#000">1A PHA</div>
<div class="t" style="left:526px;top:137px;font-size:12px;letter-spacing:-0.2px;line-height:12px;color:#000">Ja</div>
<div class="t" style="left:564px;top:137px;font-size:12px;letter-spacing:0.5px;line-height:12px;color:#000">3683092</div>
<div class="t" style="left:622px;top:137px;font-size:12px;letter-spacing:-0.2px;line-height:12px;color:#000">---</div>
<div class="t" style="left:3px;top:152px;font-size:12px;letter-spacing:-0.2px;line-height:12px;color:#000">ALLOPURINOL RAT 100MG TAB</div>
<div class="t" style="left:229px;top:152px;font-size:12px;letter-spacing:0.5px;line-height:12px;color:#000">100 St</div>
<div class="t" style="left:305px;top:152px;font-size:12px;letter-spacing:-0.2px;line-height:12px;color:#000">TAB</div>
<div class="t" style="left:336px;top:152px;font-size:12px;letter-spacing:0.1px;line-height:12px;color:#000">N3</div>
<div class="t" style="left:359px;top:152px;font-size:12px;letter-spacing:-0.2px;line-height:12px;color:#000">RATIOP</div>
<div class="t" style="left:412px;top:152px;font-size:12px;letter-spacing:0.6px;line-height:12px;color:#000">3,00</div>
<div class="t" style="left:469px;top:152px;font-size:12px;letter-spacing:0.6px;line-height:12px;color:#000">300,00</div>
<div class="t" style="left:526px;top:152px;font-size:12px;letter-spacing:-0.2px;line-height:12px;color:#000">Ja</div>
<div class="t" style="left:564px;top:152px;font-size:12px;letter-spacing:0.5px;line-height:12px;color:#000">1675496</div>
<div class="t" style="left:622px;top:152px;font-size:12px;letter-spacing:-0.2px;line-height:12px;color:#000">---</div>
<div class="t" style="left:3px;top:167px;font-size:12px;letter-spacing:-0.2px;line-height:12px;color:#000">ALLOPURINOL RAT 300MG TAB</div>
<div class="t" style="left:229px;top:167px;font-size:12px;letter-spacing:0.5px;line-height:12px;color:#000">100 St</div>
<div class="t" style="left:305px;top:167px;font-size:12px;letter-spacing:-0.2px;line-height:12px;color:#000">TAB</div>
<div class="t" style="left:336px;top:167px;font-size:12px;letter-spacing:0.1px;line-height:12px;color:#000">N3</div>
<div class="t" style="left:359px;top:167px;font-size:12px;letter-spacing:-0.2px;line-height:12px;color:#000">RATIOP</div>
<div class="t" style="left:412px;top:167px;font-size:12px;letter-spacing:0.6px;line-height:12px;color:#000">4,00</div>
<div class="t" style="left:469px;top:167px;font-size:12px;letter-spacing:0.6px;line-height:12px;color:#000">400,00</div>
<div class="t" style="left:526px;top:167px;font-size:12px;letter-spacing:-0.2px;line-height:12px;color:#000">Ja</div>
<div class="t" style="left:564px;top:167px;font-size:12px;letter-spacing:0.5px;line-height:12px;color:#000">2079997</div>
<div class="t" style="left:622px;top:167px;font-size:12px;letter-spacing:-0.2px;line-height:12px;color:#000">---</div>
<div class="t" style="left:3px;top:182px;font-size:12px;letter-spacing:-0.2px;line-height:12px;color:#000">ALLOPURINOL RAT 300MG TAB</div>
<div class="t" style="left:229px;top:182px;font-size:12px;letter-spacing:0.5px;line-height:12px;color:#000">50 St</div>
<div class="t" style="left:305px;top:182px;font-size:12px;letter-spacing:-0.2px;line-height:12px;color:#000">TAB</div>
<div class="t" style="left:336px;top:182px;font-size:12px;letter-spacing:0.1px;line-height:12px;color:#000">N2</div>
<div class="t" style="left:359px;top:182px;font-size:12px;letter-spacing:-0.2px;line-height:12px;color:#000">RATIOP</div>
<div class="t" style="left:526px;top:182px;font-size:12px;letter-spacing:-0.2px;line-height:12px;color:#000">Ja</div>
<div class="t" style="left:564px;top:182px;font-size:12px;letter-spacing:0.5px;line-height:12px;color:#000">2788104</div>
<div class="t" style="left:622px;top:182px;font-size:12px;letter-spacing:-0.2px;line-height:12px;color:#000">---</div>
<div class="t" style="left:3px;top:197px;font-size:12px;letter-spacing:-0.1px;line-height:12px;color:#000">ALLOPURINOL STADA 300</div>
<div class="t" style="left:229px;top:197px;font-size:12px;letter-spacing:0.5px;line-height:12px;color:#000">100 St</div>
<div class="t" style="left:305px;top:197px;font-size:12px;letter-spacing:-0.2px;line-height:12px;color:#000">TAB</div>
<div class="t" style="left:336px;top:197px;font-size:12px;letter-spacing:0.1px;line-height:12px;color:#000">N3</div>
<div class="t" style="left:359px;top:197px;font-size:12px;letter-spacing:-0.2px;line-height:12px;color:#000">STADAP</div>
<div class="t" style="left:526px;top:197px;font-size:12px;letter-spacing:-0.2px;line-height:12px;color:#000">Ja</div>
<div class="t" style="left:564px;top:197px;font-size:12px;letter-spacing:0.5px;line-height:12px;color:#000">2055519</div>
<div class="t" style="left:622px;top:197px;font-size:12px;letter-spacing:-0.2px;line-height:12px;color:#000">---</div>
<div class="t" style="left:3px;top:212px;font-size:12px;letter-spacing:-0.4px;line-height:12px;color:#000">ALLVORAN SF</div>
<div class="t" style="left:229px;top:212px;font-size:12px;letter-spacing:0.5px;line-height:12px;color:#000">30X3 ml</div>
<div class="t" style="left:305px;top:212px;font-size:12px;letter-spacing:-0.2px;line-height:12px;color:#000">AMP</div>
<div class="t" style="left:359px;top:212px;font-size:12px;letter-spacing:-0.2px;line-height:12px;color:#000">TAD</div>
<div class="t" style="left:526px;top:212px;font-size:12px;letter-spacing:-0.2px;line-height:12px;color:#000">Ja</div>
<div class="t" style="left:564px;top:212px;font-size:12px;letter-spacing:0.5px;line-height:12px;color:#000">3817078</div>
<div class="t" style="left:622px;top:212px;font-size:12px;letter-spacing:-0.2px;line-height:12px;color:#000">---</div>
<div class="t" style="left:3px;top:227px;font-size:12px;letter-spacing:-0.3px;line-height:12px;color:#000">ALOXI 250 MIKROGRAMM</div>
<div class="t" style="left:229px;top:227px;font-size:12px;letter-spacing:0.5px;line-height:12px;color:#000">1 St</div>
<div class="t" style="left:305px;top:227px;font-size:12px;letter-spacing:-0.2px;line-height:12px;color:#000">IFL</div>
<div class="t" style="left:336px;top:227px;font-size:12px;letter-spacing:0.1px;line-height:12px;color:#000">N1</div>
<div class="t" style="left:359px;top:227px;font-size:12px;letter-spacing:-0.2px;line-height:12px;color:#000">RIBOSE</div>
<div class="t" style="left:412px;top:227px;font-size:12px;letter-spacing:0.6px;line-height:12px;color:#000">131,00</div>
<div class="t" style="left:469px;top:227px;font-size:12px;letter-spacing:0.6px;line-height:12px;color:#000">131,00</div>
<div class="t" style="left:526px;top:227px;font-size:12px;letter-spacing:-0.2px;line-height:12px;color:#000">Ja</div>
<div class="t" style="left:564px;top:227px;font-size:12px;letter-spacing:0.5px;line-height:12px;color:#000">4408057</div>
<div class="t" style="left:622px;top:227px;font-size:12px;letter-spacing:-0.2px;line-height:12px;color:#000">---</div>
<div class="t" style="left:3px;top:242px;font-size:12px;letter-spacing:-0.55px;line-height:12px;color:#000">ALUDERM ALUPLAST BRAUNUELE</div>
<div class="t" style="left:229px;top:242px;font-size:12px;letter-spacing:0.5px;line-height:12px;color:#000">20 St</div>
<div class="t" style="left:305px;top:242px;font-size:12px;letter-spacing:-0.2px;line-height:12px;color:#000">PFL</div>
<div class="t" style="left:359px;top:242px;font-size:12px;letter-spacing:-0.2px;line-height:12px;color:#000">SOEHNG</div>
<div class="t" style="left:412px;top:242px;font-size:12px;letter-spacing:0.6px;line-height:12px;color:#000">17,00</div>
<div class="t" style="left:469px;top:242px;font-size:12px;letter-spacing:0.6px;line-height:12px;color:#000">340,00</div>
<div class="t" style="left:526px;top:242px;font-size:12px;letter-spacing:-0.2px;line-height:12px;color:#000">Ja</div>
<div class="t" style="left:564px;top:242px;font-size:12px;letter-spacing:0.5px;line-height:12px;color:#000">0008036</div>
<div class="t" style="left:622px;top:242px;font-size:12px;letter-spacing:-0.2px;line-height:12px;color:#000">---</div>
<div class="t" style="left:3px;top:257px;font-size:12px;letter-spacing:-0.2px;line-height:12px;color:#000">AMARYL 1MG</div>
<div class="t" style="left:229px;top:257px;font-size:12px;letter-spacing:0.5px;line-height:12px;color:#000">112 St</div>
<div class="t" style="left:305px;top:257px;font-size:12px;letter-spacing:-0.2px;line-height:12px;color:#000">TAB</div>
<div class="t" style="left:336px;top:257px;font-size:12px;letter-spacing:0.1px;line-height:12px;color:#000">N2</div>
<div class="t" style="left:359px;top:257px;font-size:12px;letter-spacing:-0.2px;line-height:12px;color:#000">SANOFI</div>
<div class="t" style="left:526px;top:257px;font-size:12px;letter-spacing:-0.2px;line-height:12px;color:#000">Ja</div>
<div class="t" style="left:564px;top:257px;font-size:12px;letter-spacing:0.5px;line-height:12px;color:#000">3109335</div>
<div class="t" style="left:622px;top:257px;font-size:12px;letter-spacing:-0.2px;line-height:12px;color:#000">---</div>
<div class="t" style="left:3px;top:272px;font-size:12px;letter-spacing:-0.2px;line-height:12px;color:#000">AMBIX INTRAST SYS 20GX14MM</div>
<div class="t" style="left:229px;top:272px;font-size:12px;letter-spacing:0.5px;line-height:12px;color:#000">1 St</div>
<div class="t" style="left:359px;top:272px;font-size:12px;letter-spacing:-0.2px;line-height:12px;color:#000">FRESEN</div>
<div class="t" style="left:412px;top:272px;font-size:12px;letter-spacing:0.6px;line-height:12px;color:#000">79,00</div>
<div class="t" style="left:469px;top:272px;font-size:12px;letter-spacing:0.6px;line-height:12px;color:#000">79,00</div>
<div class="t" style="left:526px;top:272px;font-size:12px;letter-spacing:-0.2px;line-height:12px;color:#000">Ja</div>
<div class="t" style="left:564px;top:272px;font-size:12px;letter-spacing:0.5px;line-height:12px;color:#000">2061856</div>
<div class="t" style="left:622px;top:272px;font-size:12px;letter-spacing:-0.2px;line-height:12px;color:#000">---</div>
<div class="t" style="left:3px;top:287px;font-size:12px;letter-spacing:-0.2px;line-height:12px;color:#000">AMBIX INTRAST SYS 20GX17MM</div>
<div class="t" style="left:229px;top:287px;font-size:12px;letter-spacing:0.5px;line-height:12px;color:#000">1 St</div>
<div class="t" style="left:359px;top:287px;font-size:12px;letter-spacing:-0.2px;line-height:12px;color:#000">FRESEN</div>
<div class="t" style="left:412px;top:287px;font-size:12px;letter-spacing:0.6px;line-height:12px;color:#000">150,00</div>
<div class="t" style="left:469px;top:287px;font-size:12px;letter-spacing:0.6px;line-height:12px;color:#000">150,00</div>
<div class="t" style="left:526px;top:287px;font-size:12px;letter-spacing:-0.2px;line-height:12px;color:#000">Ja</div>
<div class="t" style="left:564px;top:287px;font-size:12px;letter-spacing:0.5px;line-height:12px;color:#000">2061862</div>
<div class="t" style="left:622px;top:287px;font-size:12px;letter-spacing:-0.2px;line-height:12px;color:#000">---</div>
<div class="t" style="left:3px;top:302px;font-size:12px;letter-spacing:-0.2px;line-height:12px;color:#000">AMBIX INTRAST SYS 22GX14MM</div>
<div class="t" style="left:229px;top:302px;font-size:12px;letter-spacing:0.5px;line-height:12px;color:#000">1 St</div>
<div class="t" style="left:359px;top:302px;font-size:12px;letter-spacing:-0.2px;line-height:12px;color:#000">FRESEN</div>
<div class="t" style="left:412px;top:302px;font-size:12px;letter-spacing:0.6px;line-height:12px;color:#000">39,00</div>
<div class="t" style="left:469px;top:302px;font-size:12px;letter-spacing:0.6px;line-height:12px;color:#000">39,00</div>
<div class="t" style="left:526px;top:302px;font-size:12px;letter-spacing:-0.2px;line-height:12px;color:#000">Ja</div>
<div class="t" style="left:564px;top:302px;font-size:12px;letter-spacing:0.5px;line-height:12px;color:#000">2061980</div>
<div class="t" style="left:622px;top:302px;font-size:12px;letter-spacing:-0.2px;line-height:12px;color:#000">---</div>
<div class="t" style="left:3px;top:317px;font-size:12px;letter-spacing:-0.2px;line-height:12px;color:#000">AMINOPAED 10% GLAS</div>
<div class="t" style="left:229px;top:317px;font-size:12px;letter-spacing:0.5px;line-height:12px;color:#000">6X1000 ml</div>
<div class="t" style="left:305px;top:317px;font-size:12px;letter-spacing:-0.2px;line-height:12px;color:#000">IFF</div>
<div class="t" style="left:336px;top:317px;font-size:12px;letter-spacing:0.1px;line-height:12px;color:#000">N3</div>
<div class="t" style="left:359px;top:317px;font-size:12px;letter-spacing:-0.2px;line-height:12px;color:#000">BAXTER</div>
<div class="t" style="left:526px;top:317px;font-size:12px;letter-spacing:-0.2px;line-height:12px;color:#000">Ja</div>
<div class="t" style="left:564px;top:317px;font-size:12px;letter-spacing:0.5px;line-height:12px;color:#000">3986711</div>
<div class="t" style="left:622px;top:317px;font-size:12px;letter-spacing:-0.2px;line-height:12px;color:#000">---</div>
<div class="t" style="left:3px;top:332px;font-size:12px;letter-spacing:-0.2px;line-height:12px;color:#000">ANAESTHESIN CREME</div>
<div class="t" style="left:229px;top:332px;font-size:12px;letter-spacing:0.5px;line-height:12px;color:#000">20 g</div>
<div class="t" style="left:305px;top:332px;font-size:12px;letter-spacing:-0.2px;line-height:12px;color:#000">CRE</div>
<div class="t" style="left:336px;top:332px;font-size:12px;letter-spacing:0.1px;line-height:12px;color:#000">N1</div>
<div class="t" style="left:359px;top:332px;font-size:12px;letter-spacing:-0.2px;line-height:12px;color:#000">RIEMSER</div>
<div class="t" style="left:526px;top:332px;font-size:12px;letter-spacing:-0.2px;line-height:12px;color:#000">Ja</div>
<div class="t" style="left:564px;top:332px;font-size:12px;letter-spacing:0.5px;line-height:12px;color:#000">1234567</div>
<div class="t" style="left:622px;top:332px;font-size:12px;letter-spacing:-0.2px;line-height:12px;color:#000">---</div>
<div class="a" style="left:716px;top:0;width:16px;height:333px;background:repeating-conic-gradient(#fff 0 25%,#d4d0c8 0 50%) 0 0/2px 2px"></div>
<div class="sb" style="left:716px;top:0;width:16px;height:16px"></div>
<svg class="a" style="left:720px;top:6px" width="7" height="4" shape-rendering="crispEdges" fill="#000"><rect x="3" y="0" width="1" height="1"/><rect x="2" y="1" width="3" height="1"/><rect x="1" y="2" width="5" height="1"/><rect x="0" y="3" width="7" height="1"/></svg>
<div class="sb" style="left:716px;top:55px;width:16px;height:16px"></div>
<div class="sb" style="left:716px;top:317px;width:16px;height:16px"></div>
<svg class="a" style="left:720px;top:323px" width="7" height="4" shape-rendering="crispEdges" fill="#000"><rect x="0" y="0" width="7" height="1"/><rect x="1" y="1" width="5" height="1"/><rect x="2" y="2" width="3" height="1"/><rect x="3" y="3" width="1" height="1"/></svg>
<div class="a" style="left:0;top:333px;width:716px;height:16px;background:repeating-conic-gradient(#fff 0 25%,#d4d0c8 0 50%) 0 0/2px 2px"></div>
<div class="sb" style="left:0;top:333px;width:16px;height:16px"></div>
<svg class="a" style="left:5px;top:337px" width="4" height="7" shape-rendering="crispEdges" fill="#000"><rect x="0" y="3" width="1" height="1"/><rect x="1" y="2" width="1" height="3"/><rect x="2" y="1" width="1" height="5"/><rect x="3" y="0" width="1" height="7"/></svg>
<div class="sb" style="left:16px;top:333px;width:16px;height:16px"></div>
<div class="sb" style="left:700px;top:333px;width:16px;height:16px"></div>
<svg class="a" style="left:706px;top:337px" width="4" height="7" shape-rendering="crispEdges" fill="#000"><rect x="0" y="0" width="1" height="7"/><rect x="1" y="1" width="1" height="5"/><rect x="2" y="2" width="1" height="3"/><rect x="3" y="3" width="1" height="1"/></svg>
<div class="a" style="left:716px;top:333px;width:16px;height:16px;background:#d4d0c8"></div>
</div>
<div class="btn" style="left:12px;top:494px;width:95px;height:25px;line-height:22px;font-weight:bold;font-size:11.75px;"><u>O</u>K</div>
<div class="btn" style="left:108px;top:494px;width:95px;height:25px;line-height:22px;font-weight:bold;font-size:11.75px;"><u>A</u>bbrechen</div>
<div class="btn" style="left:206px;top:494px;width:94px;height:25px;line-height:22px;font-weight:bold;font-size:11.75px;">Ar<u>t</u>. anzeigen</div>
<div class="btn" style="left:302px;top:494px;width:95px;height:25px;line-height:22px;"><u>N</u>euer Artikel</div>
<div class="btn" style="left:399px;top:494px;width:95px;height:25px;line-height:22px;"><u>B</u>asis-Artikel</div>
<div class="btn" style="left:497px;top:494px;width:95px;height:25px;line-height:22px;">ABDA Art-Stamm</div>
<div class="t" style="left:611px;top:499px;color:#808080;font-size:9px;letter-spacing:0.4px;line-height:10px">SQL:</div>
<div class="t" style="left:0;width:744px;text-align:right;top:499px;color:#000080;font-size:12px;line-height:12px">79</div>
</div></body></html>
